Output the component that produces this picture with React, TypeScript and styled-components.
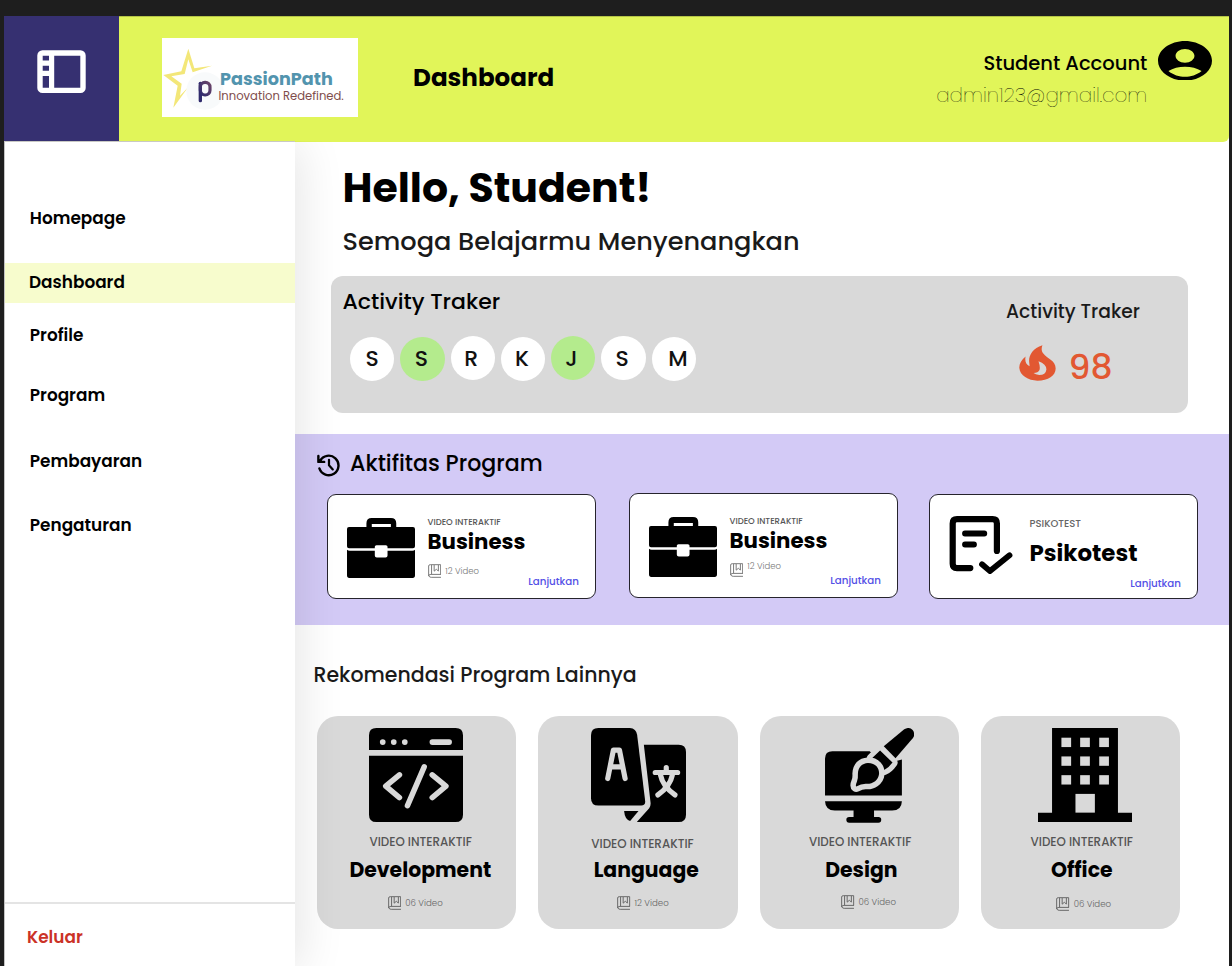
import React from 'react';
import styled, { createGlobalStyle } from 'styled-components';

const GlobalStyle = createGlobalStyle`
  * { box-sizing: border-box; }
  html, body { margin: 0; padding: 0; background: #1e1e1e; }
  body {
    font-family: Poppins, Inter, "Open Sans", sans-serif;
    color: #000;
    overflow: hidden;
  }
`;

const Page = styled.div`
  width: 1232px;
  height: 966px;
  padding: 16px 3px 0 4px;
  background: #1e1e1e;
  display: flex;
  flex-direction: column;
  overflow: hidden;
`;

const Surface = styled.div`
  flex: 1;
  min-height: 0;
  background: #fff;
  display: flex;
  flex-direction: column;
`;

interface TextProps {
  $size: number;
  $weight?: number;
  $line: number;
  $color?: string;
  $top?: number;
  $shift?: number;
}

const Text = styled.span<TextProps>`
  display: block;
  white-space: nowrap;
  font-size: ${p => p.$size}px;
  font-weight: ${p => p.$weight ?? 400};
  line-height: ${p => p.$line}px;
  color: ${p => p.$color ?? '#000'};
  margin-top: ${p => p.$top ?? 0}px;
  margin-left: ${p => p.$shift ?? 0}px;
`;

/* ---------- header ---------- */

const Header = styled.header`
  display: flex;
  flex: none;
  height: 126px;
  margin-bottom: -1px;
  background: #e1f559;
  border-radius: 0 0 6px 0;
  box-shadow: inset 0 1px 0 #b4c447;
`;

const MenuButton = styled.button`
  display: flex;
  align-items: flex-start;
  width: 115px;
  height: 125px;
  padding: 34px 0 0 33px;
  border: 0;
  background: #363071;
  svg { display: block; flex: none; }
`;

const Logo = styled.div`
  display: flex;
  width: 196px;
  height: 78.5px;
  margin: 22.3px 0 0 43px;
  background: #fff;
  svg { display: block; flex: none; }
`;

const LogoWords = styled.div`
  margin-left: -6px;
  padding-top: 31px;
`;

const HeaderTitle = styled.h1`
  margin: 45.5px 0 0 55px;
  font-size: 24.6px;
  font-weight: 700;
  line-height: 32px;
`;

const Account = styled.div`
  margin-left: auto;
  margin-top: 32px;
  display: flex;
  flex-direction: column;
  align-items: flex-end;
`;

const Avatar = styled.div`
  margin: 24.5px 16.7px 0 11px;
  svg { display: block; }
`;

/* ---------- sidebar ---------- */

const Body = styled.div`
  display: flex;
  flex: 1;
  min-height: 0;
`;

const Sidebar = styled.aside`
  position: relative;
  z-index: 1;
  width: 291px;
  flex: none;
  display: flex;
  flex-direction: column;
  background: #fff;
  border-top: 1px solid #c9c9c4;
  border-left: 1px solid #c4c4c4;
  box-shadow: 4px 4px 44px rgba(0, 0, 0, 0.11);
  clip-path: inset(0 -70px 0 0);
  padding-top: 56px;
`;

const NavItem = styled.a<{ $gap?: number; $active?: boolean }>`
  display: flex;
  align-items: center;
  height: 40px;
  margin-top: ${p => p.$gap ?? 0}px;
  padding-left: ${p => (p.$active ? 24 : 24.8)}px;
  padding-bottom: ${p => (p.$active ? 2 : 0)}px;
  background: ${p => (p.$active ? '#f7fccd' : 'transparent')};
  font-size: 16.9px;
  font-weight: 600;
`;

const Logout = styled.a`
  display: flex;
  align-items: center;
  height: 64px;
  margin-top: auto;
  padding: 3px 0 0 22px;
  border-top: 2.5px solid #e4e4e4;
  font-size: 16.9px;
  font-weight: 600;
  color: #cb3227;
`;

/* ---------- main ---------- */

const Main = styled.main`
  flex: 1;
  min-width: 0;
  display: flex;
  flex-direction: column;
`;

const Greeting = styled.section`
  height: 135px;
  padding: 20.5px 0 0 47.5px;
`;

const Tracker = styled.section`
  display: flex;
  justify-content: space-between;
  width: 857px;
  height: 137px;
  margin-left: 36px;
  padding: 10px 48px 0 11.5px;
  border-radius: 12px;
  background: #d9d9d9;
`;

const Days = styled.div`
  display: flex;
  gap: 6px;
  margin: 19.5px 0 0 7.5px;
`;

const Day = styled.span<{ $done?: boolean; $raised?: boolean; $nudge?: number }>`
  width: 44.3px;
  height: 44.3px;
  margin-top: ${p => (p.$raised ? -1 : 0)}px;
  padding-top: ${p => (p.$raised ? 2 : 0)}px;
  padding-left: ${p => Math.max(p.$nudge ?? 0, 0)}px;
  padding-right: ${p => Math.max(-(p.$nudge ?? 0), 0)}px;
  border-radius: 50%;
  display: flex;
  align-items: center;
  justify-content: center;
  background: ${p => (p.$done ? '#b4eb8d' : '#fff')};
  color: #111;
  font-size: 22px;
  font-weight: 500;
`;

const Streak = styled.div`
  display: flex;
  align-items: flex-start;
  margin: 20px 0 0 13px;
  svg { display: block; }
`;

const Activities = styled.section`
  height: 191px;
  margin-top: 21px;
  background: #d3caf6;
`;

const ActivitiesHead = styled.div`
  display: flex;
  align-items: center;
  height: 60px;
  padding-left: 21.5px;
  svg { margin-top: 3px; }
`;

const ActivityRow = styled.div`
  display: flex;
  align-items: flex-start;
  padding-left: 32px;
`;

const ActivityCard = styled.article<{ $top?: number; $gap?: number }>`
  display: flex;
  width: 269px;
  height: 105.4px;
  margin-top: ${p => p.$top ?? 0}px;
  margin-left: ${p => p.$gap ?? 0}px;
  padding-right: 16px;
  border: 1.2px solid #26242c;
  border-radius: 9px;
  background: #fff;
`;

const ActivityIcon = styled.div<{ $top: number }>`
  width: 99.5px;
  flex: none;
  padding: ${p => p.$top}px 0 0 18.7px;
  svg { display: block; }
`;

const ActivityText = styled.div<{ $top: number }>`
  flex: 1;
  display: flex;
  flex-direction: column;
  padding-top: ${p => p.$top}px;
`;

const Meta = styled.div<{ $top: number; $shift?: number }>`
  display: flex;
  align-items: center;
  gap: 4px;
  height: 14px;
  margin-top: ${p => p.$top}px;
  margin-left: ${p => p.$shift ?? 0}px;
`;

const ContinueLink = styled.a<{ $top: number }>`
  align-self: flex-end;
  margin-top: ${p => p.$top}px;
  font-size: 10.3px;
  font-weight: 500;
  line-height: 14px;
  color: #5450e6;
`;

const Recommend = styled.section`
  padding: 34.5px 0 0 18.5px;
`;

const RecommendRow = styled.div`
  display: flex;
  gap: 22.2px;
  margin: 26.5px 0 0 3.5px;
`;

const RecommendCard = styled.article`
  display: flex;
  flex-direction: column;
  align-items: center;
  width: 199.2px;
  height: 213px;
  padding-top: 12.4px;
  border-radius: 21px;
  background: #d9d9d9;
`;

const IconSlot = styled.div<{ $shift: number }>`
  height: 94px;
  margin-left: ${p => p.$shift}px;
  svg { display: block; }
`;

/* ---------- icons ---------- */

const PanelIcon = () => (
  <svg width="49" height="44" viewBox="0 0 49 44" fill="none">
    <rect x="3" y="3" width="43" height="37.4" rx="2.5" stroke="#fff" strokeWidth="5.4" />
    <path d="M14.6 3v37M4 13.2h10M4 23.3h10" stroke="#fff" strokeWidth="5.2" />
  </svg>
);

const StarLogo = () => (
  <svg width="64" height="78" viewBox="487 115 192 234">
    <defs>
      <linearGradient id="mark" x1="0" y1="1" x2="1" y2="0">
        <stop offset="0" stopColor="#2d2a6e" />
        <stop offset="1" stopColor="#6b4468" />
      </linearGradient>
    </defs>
    <path
      fill="#f3e779"
      fillRule="evenodd"
      d="M566 147 L584 206 L637 198 L579 218 L566 179 L555 223 L515 230 L546 252 L541 288 L566 262 L521 324 L534 258 L491 226 L545 215Z"
    />
    <circle cx="616" cy="274" r="56" fill="#f8fafb" />
    <rect x="597" y="246" width="10" height="62" rx="4.5" fill="#302b6d" />
    <rect x="602" y="248" width="29" height="38" rx="14" fill="none" stroke="url(#mark)" strokeWidth="9.5" />
  </svg>
);

const AvatarIcon = () => (
  <svg width="54" height="39.6" viewBox="2 2 20 20" preserveAspectRatio="none">
    <path d="M12 2C6.48 2 2 6.48 2 12s4.48 10 10 10 10-4.48 10-10S17.52 2 12 2zm0 4c1.93 0 3.5 1.57 3.5 3.5S13.93 13 12 13s-3.5-1.57-3.5-3.5S10.07 6 12 6zm0 14c-2.03 0-4.43-.82-6.14-2.88C7.55 15.8 9.68 15 12 15s4.45.8 6.14 2.12C16.43 19.18 14.03 20 12 20z" />
  </svg>
);

const FlameIcon = () => (
  <svg width="37" height="36" viewBox="117 192 112 109" preserveAspectRatio="none">
    <path
      fill="#e25832"
      fillRule="evenodd"
      d="M188 193C157 203 145 226 148 246q1 7 1 10C138 251 134 240 137 227C124 237 117 250 118 262C120 285 145 300 173 300C205 300 228 285 228 263C228 238 203 235 190 217C184 209 185 200 188 193Z M176 241Q200 249 200 266Q198 283 178 283Q167 282 161 277Q175 277 179 268Q182 258 176 241Z"
    />
  </svg>
);

const HistoryIcon = () => (
  <svg width="24" height="23" viewBox="51 103 70 67" fill="none" stroke="#000" strokeWidth="7" strokeLinecap="round" strokeLinejoin="round">
    <path d="M60 123A28.5 28.5 0 1 1 58 145" />
    <path d="M55 109v17h17M57 121l6 3" />
    <path d="M86 120v16l11 12" strokeWidth="6.5" />
  </svg>
);

const BriefcaseIcon = () => (
  <svg width="68" height="60" viewBox="142 295 203 179" preserveAspectRatio="none">
    <path
      fillRule="evenodd"
      d="M200 322v-11q0-16 16-16h57q16 0 16 16v11h50q6 0 6 6v51q0 6-6 6h-76v-4q0-5-5-5h-28q-5 0-5 5v4h-77q-6 0-6-6v-51q0-6 6-6zM216 322h57v-9h-57z"
    />
    <path d="M142 390q3 3 8 3h75v14q0 6 6 6h26q6 0 6-6v-14h74q6 0 8-3v76q0 8-7 8H149q-7 0-7-8z" />
  </svg>
);

const TestIcon = () => (
  <svg width="64" height="58" viewBox="949 515.5 64 58" fill="none" stroke="#000" strokeWidth="6.2" strokeLinecap="round" strokeLinejoin="round">
    <path d="M970.3 567.6H957q-4.3 0-4.3-4.3V523q0-4.3 4.3-4.3h35.6q4.3 0 4.3 4.3v27.5" />
    <path d="M965 533h19.3M965 544h9M982 563.8l8 6.8 19.5-15.8" strokeWidth="5.8" />
  </svg>
);

const BookIcon = ({ color = '#777' }: { color?: string }) => (
  <svg width="13.3" height="14" viewBox="385 431 41 43" fill="none" stroke={color} strokeWidth="3">
    <path d="M425 463H394q-7 0-7 5V437q0-4 5-4h32v30M396 434v28M404 434v19l7-6 6 6v-19M388 468q1 4 7 4h30" />
  </svg>
);

const CodeIcon = () => (
  <svg width="94" height="94" viewBox="177 85 281 281">
    <path d="M177 151V107q0-22 22-22H436q22 0 22 22V151ZM177 168H458V344q0 22-22 22H199q-22 0-22-22Z" />
    <g fill="#d9d9d9">
      <circle cx="218" cy="127" r="8.5" />
      <circle cx="251" cy="127" r="8.5" />
      <circle cx="284" cy="127" r="8.5" />
      <rect x="358" y="118.5" width="67" height="17" rx="8.5" />
    </g>
    <path d="M268 225L227 259L268 293M366 225L407 259L366 293M342 201L292 317" fill="none" stroke="#d9d9d9" strokeWidth="16.5" strokeLinecap="round" strokeLinejoin="round" />
  </svg>
);

const LanguageIcon = () => (
  <svg width="95" height="94" viewBox="182 85 284 281">
    <path d="M204 85H298Q317 86 320 106L344 304Q345 317 332 317H204q-22 0-22-22V107q0-22 22-22Z" />
    <path d="M340 135H444q22 0 22 22V344q0 22-22 22H319L356 325Q361 318 360 308Z" />
    <path d="M281 333H324L299 363Q283 358 281 333Z" />
    <g fill="none" stroke="#d9d9d9" strokeWidth="15.5" strokeLinecap="round" strokeLinejoin="round">
      <path d="M232 236L249 151H267L284 236M244 201H272" />
      <path d="M407 203V217M374 218H441M390 226Q396 258 433 285M425 226Q419 258 382 285" />
    </g>
  </svg>
);

const DesignIcon = () => (
  <svg width="89" height="95" viewBox="224 82 265 283">
    <path d="M224 283V173q0-22 22-22H357L400 190L453 176V283Z" />
    <path d="M224 300H453Q452 328 424 328H370V347H383a8.5 8.5 0 0 1 0 17H296a8.5 8.5 0 0 1 0-17H309V328H253Q225 327 224 300Z" />
    <path d="M363 173L388 149L425 185Q414 201 399 208Q388 180 363 173Z" stroke="#d9d9d9" strokeWidth="30" strokeLinejoin="round" />
    <path d="M363 173L388 149L425 185Q414 201 399 208Q388 180 363 173Z" />
    <path d="M399 136L460 86Q474 77 485 88Q494 100 486 112L434 172Z" stroke="#d9d9d9" strokeWidth="10" />
    <path d="M399 136L460 86Q474 77 485 88Q494 100 486 112L434 172Z" />
    <path d="M352 186C375 186 386 202 385 218C383 238 365 250 345 248Q331 248 317 256Q314 254 319 242Q323 232 322 218C323 198 334 187 352 186Z" stroke="#d9d9d9" strokeWidth="33" strokeLinejoin="round" />
    <path d="M352 186C375 186 386 202 385 218C383 238 365 250 345 248Q331 248 317 256Q314 254 319 242Q323 232 322 218C323 198 334 187 352 186Z" />
  </svg>
);

const OfficeIcon = () => (
  <svg width="94" height="94" viewBox="204 85 281 281">
    <path d="M246 85H443V338H485V366H204V338H246Z" />
    <g fill="#d9d9d9">
      {[114, 170, 226].map(y => [274, 330, 387].map(x => <rect key={`${x}-${y}`} x={x} y={y} width="29" height="28" />))}
      <rect x="316" y="282" width="58" height="56" />
    </g>
  </svg>
);

/* ---------- data ---------- */

const nav = [
  { label: 'Homepage', gap: 0 },
  { label: 'Dashboard', gap: 25, active: true },
  { label: 'Profile', gap: 12 },
  { label: 'Program', gap: 19.5 },
  { label: 'Pembayaran', gap: 26.5 },
  { label: 'Pengaturan', gap: 24.3 },
];

const days = [
  { d: 'S' },
  { d: 'S', done: true, nudge: -2 },
  { d: 'R', raised: true, nudge: -3 },
  { d: 'K', nudge: -2 },
  { d: 'J', done: true, raised: true, nudge: -4 },
  { d: 'S', raised: true, nudge: -3 },
  { d: 'M', nudge: 8 },
];

const programs = [
  { title: 'Development', count: '06 Video', Icon: CodeIcon, icon: -2, label: 8, name: 7.5, meta: -2.5, labelTop: 14, nameTop: 10.2, metaTop: 15.2 },
  { title: 'Language', count: '12 Video', Icon: LanguageIcon, icon: 1, label: 9, name: 16.5, meta: 10, labelTop: 16, nameTop: 8.2, metaTop: 15.2 },
  { title: 'Design', count: '06 Video', Icon: DesignIcon, icon: 20, label: 1.5, name: 4, meta: 18.5, labelTop: 14, nameTop: 10.2, metaTop: 14.5 },
  { title: 'Office', count: '06 Video', Icon: OfficeIcon, icon: 9, label: 2, name: 2, meta: 6, labelTop: 14, nameTop: 10.2, metaTop: 16.2 },
];

export default function App() {
  return (
    <Page>
      <GlobalStyle />
      <Surface>
        <Header>
          <MenuButton aria-label="Menu"><PanelIcon /></MenuButton>
          <Logo>
            <StarLogo />
            <LogoWords>
              <Text $size={17.6} $weight={700} $line={20} $color="#5294ae">PassionPath</Text>
              <Text $size={11.6} $line={16} $top={-1} $shift={-1.5} $color="#804d4b">Innovation Redefined.</Text>
            </LogoWords>
          </Logo>
          <HeaderTitle>Dashboard</HeaderTitle>
          <Account>
            <Text $size={19.5} $weight={500} $line={31}>Student Account</Text>
            <Text $size={19.9} $weight={250} $line={32}>admin123@gmail.com</Text>
          </Account>
          <Avatar><AvatarIcon /></Avatar>
        </Header>
        <Body>
          <Sidebar>
            {nav.map(n => (
              <NavItem key={n.label} $gap={n.gap} $active={n.active}>{n.label}</NavItem>
            ))}
            <Logout>Keluar</Logout>
          </Sidebar>
          <Main>
            <Greeting>
              <Text $size={41} $weight={700} $line={52}>Hello, Student!</Text>
              <Text $size={25.6} $weight={500} $line={34} $top={10.5} $color="#1a1a1a">Semoga Belajarmu Menyenangkan</Text>
            </Greeting>
            <Tracker>
              <div>
                <Text $size={22} $weight={500} $line={31}>Activity Traker</Text>
                <Days>
                  {days.map((x, i) => (
                    <Day key={i} $done={x.done} $raised={x.raised} $nudge={x.nudge}>{x.d}</Day>
                  ))}
                </Days>
              </div>
              <div>
                <Text $size={18.7} $weight={500} $line={26} $top={12.5} $color="#1a1a1a">Activity Traker</Text>
                <Streak>
                  <FlameIcon />
                  <Text $size={34.6} $weight={500} $line={42} $top={1} $shift={12.5} $color="#e25832">98</Text>
                </Streak>
              </div>
            </Tracker>
            <Activities>
              <ActivitiesHead>
                <HistoryIcon />
                <Text $size={22.1} $weight={500} $line={32} $shift={9.5}>Aktifitas Program</Text>
              </ActivitiesHead>
              <ActivityRow>
                <ActivityCard>
                  <ActivityIcon $top={22.9}><BriefcaseIcon /></ActivityIcon>
                  <ActivityText $top={20.8}>
                    <Text $size={8.5} $weight={500} $line={12} $color="#555">VIDEO INTERAKTIF</Text>
                    <Text $size={21.3} $weight={700} $line={28}>Business</Text>
                    <Meta $top={8} $shift={0.5}>
                      <BookIcon />
                      <Text $size={8.5} $weight={300} $line={14} $color="#777">12 Video</Text>
                    </Meta>
                    <ContinueLink $top={-2.5}>Lanjutkan</ContinueLink>
                  </ActivityText>
                </ActivityCard>
                <ActivityCard $top={-1} $gap={33}>
                  <ActivityIcon $top={22.9}><BriefcaseIcon /></ActivityIcon>
                  <ActivityText $top={20.8}>
                    <Text $size={8.5} $weight={500} $line={12} $color="#555">VIDEO INTERAKTIF</Text>
                    <Text $size={21.3} $weight={700} $line={28}>Business</Text>
                    <Meta $top={8} $shift={0.5}>
                      <BookIcon />
                      <Text $size={8.5} $weight={300} $line={14} $top={-7} $color="#777">12 Video</Text>
                    </Meta>
                    <ContinueLink $top={-2.5}>Lanjutkan</ContinueLink>
                  </ActivityText>
                </ActivityCard>
                <ActivityCard $gap={31}>
                  <ActivityIcon $top={21}><TestIcon /></ActivityIcon>
                  <ActivityText $top={22.5}>
                    <Text $size={10} $weight={500} $line={12} $color="#666">PSIKOTEST</Text>
                    <Text $size={22.9} $weight={700} $line={28} $top={9.5}>Psikotest</Text>
                    <ContinueLink $top={9.5}>Lanjutkan</ContinueLink>
                  </ActivityText>
                </ActivityCard>
              </ActivityRow>
            </Activities>
            <Recommend>
              <Text $size={20.5} $weight={500} $line={30} $color="#1a1a1a">Rekomendasi Program Lainnya</Text>
              <RecommendRow>
                {programs.map(p => (
                  <RecommendCard key={p.title}>
                    <IconSlot $shift={p.icon}><p.Icon /></IconSlot>
                    <Text $size={11.9} $weight={500} $line={12} $top={p.labelTop} $shift={p.label} $color="#555">VIDEO INTERAKTIF</Text>
                    <Text $size={20.4} $weight={700} $line={22} $top={p.nameTop} $shift={p.name}>{p.title}</Text>
                    <Meta $top={p.metaTop} $shift={p.meta}>
                      <BookIcon color="#666" />
                      <Text $size={8.6} $weight={300} $line={14} $color="#666">{p.count}</Text>
                    </Meta>
                  </RecommendCard>
                ))}
              </RecommendRow>
            </Recommend>
          </Main>
        </Body>
      </Surface>
    </Page>
  );
}
